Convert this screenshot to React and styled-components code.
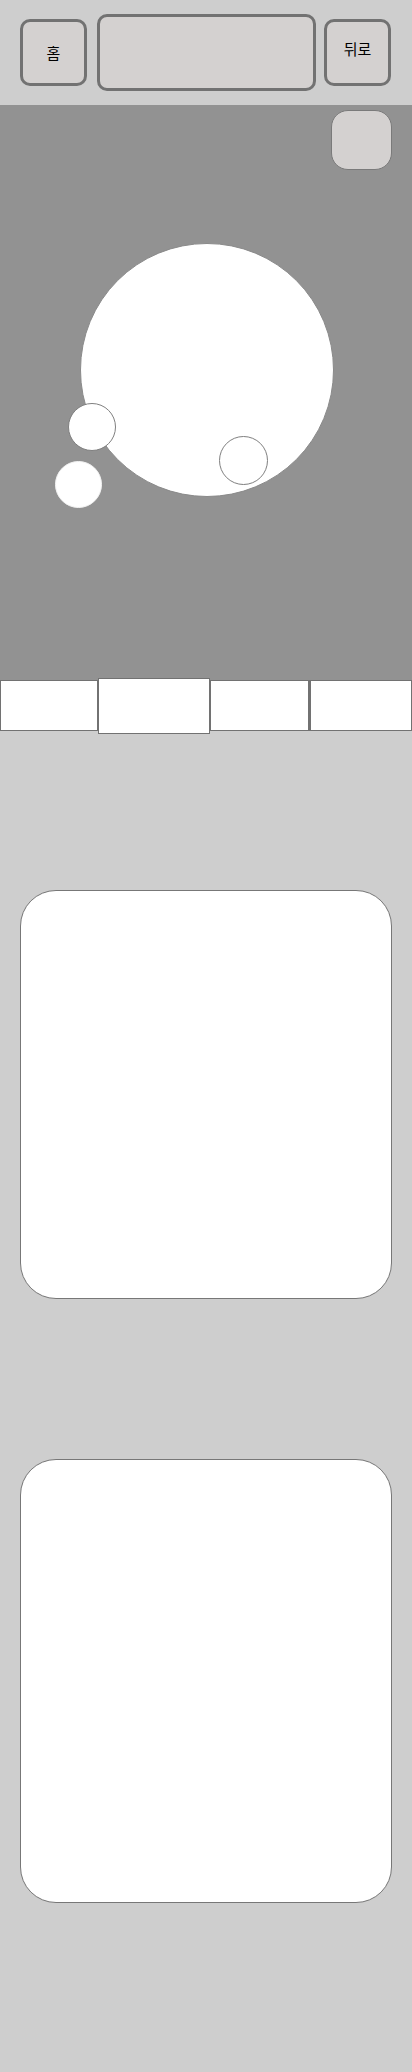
import React from 'react';
import styled, { createGlobalStyle } from 'styled-components';

const GlobalStyle = createGlobalStyle`
  html, body {
    margin: 0;
    padding: 0;
    background: #cecece;
  }
  body {
    font-family: "Noto Sans CJK KR", "Noto Sans", sans-serif;
  }
  #root {
    min-height: 2072px;
  }
`;

const Page = styled.div`
  width: 412px;
  display: flex;
  flex-direction: column;
`;

const Header = styled.header`
  height: 105px;
  box-sizing: border-box;
  padding: 0 20px;
  display: flex;
  align-items: center;
  background: #cecece;
`;

const NavButton = styled.button`
  box-sizing: border-box;
  width: ${({ wide }) => (wide ? '219px' : '67px')};
  height: ${({ wide }) => (wide ? '77px' : '67px')};
  margin: ${({ wide }) => (wide ? '0 8px 1px 10px' : '0')};
  padding: 0 0 ${({ lift }) => (lift ? '8px' : '0')} 0;
  border: 3px solid #727272;
  border-radius: 10px;
  background: #d4d1d0;
  color: #000;
  font-family: "Noto Sans CJK KR", "Noto Sans", sans-serif;
  font-size: 15px;
  line-height: 1;
  display: flex;
  align-items: center;
  justify-content: center;
`;

const Stage = styled.section`
  position: relative;
  height: 575px;
  background: #929292;
  display: flex;
  flex-direction: column;
  align-items: flex-end;
  padding: 5px 20px 0 0;
  box-sizing: border-box;
`;

const CornerButton = styled.button`
  box-sizing: border-box;
  width: 61px;
  height: 60px;
  border: 1px solid #7a7a7a;
  border-radius: 17px;
  background: #d4d1d0;
  padding: 0;
`;

const Bubble = styled.div`
  position: absolute;
  box-sizing: border-box;
  left: ${({ x }) => x}px;
  top: ${({ y }) => y}px;
  width: ${({ d }) => d}px;
  height: ${({ d }) => d}px;
  border-radius: 50%;
  background: #fff;
  border: 1px solid ${({ line }) => line || '#7f7f7f'};
`;

const TabRow = styled.nav`
  display: flex;
  align-items: flex-start;
  height: 51px;
`;

const Tab = styled.button`
  box-sizing: border-box;
  width: ${({ w }) => w}px;
  height: ${({ active }) => (active ? '56px' : '51px')};
  margin-top: ${({ active }) => (active ? '-2px' : '0')};
  border: 1px solid #727272;
  border-left-width: ${({ thick }) => (thick ? '2px' : '1px')};
  background: #fff;
  padding: 0;
  position: relative;
  z-index: ${({ active }) => (active ? 1 : 0)};
`;

const Card = styled.div`
  box-sizing: border-box;
  margin: ${({ gap }) => gap}px 20px 0 20px;
  height: ${({ h }) => h}px;
  background: #fff;
  border: 1px solid #777;
  border-radius: 36px;
`;

const App = () => {
  return (
    <Page>
      <GlobalStyle />
      <Header>
        <NavButton>홈</NavButton>
        <NavButton wide />
        <NavButton lift>뒤로</NavButton>
      </Header>
      <Stage>
        <CornerButton />
        <Bubble x={80} y={138} d={254} line="#8a8a8a" />
        <Bubble x={68} y={298} d={48} />
        <Bubble x={55} y={356} d={47} line="#f4f4f4" />
        <Bubble x={219} y={331} d={49} />
      </Stage>
      <TabRow>
        <Tab w={98} />
        <Tab w={112} active />
        <Tab w={99} />
        <Tab w={103} thick />
      </TabRow>
      <Card gap={159} h={409} />
      <Card gap={160} h={444} />
    </Page>
  );
};

export default App;
